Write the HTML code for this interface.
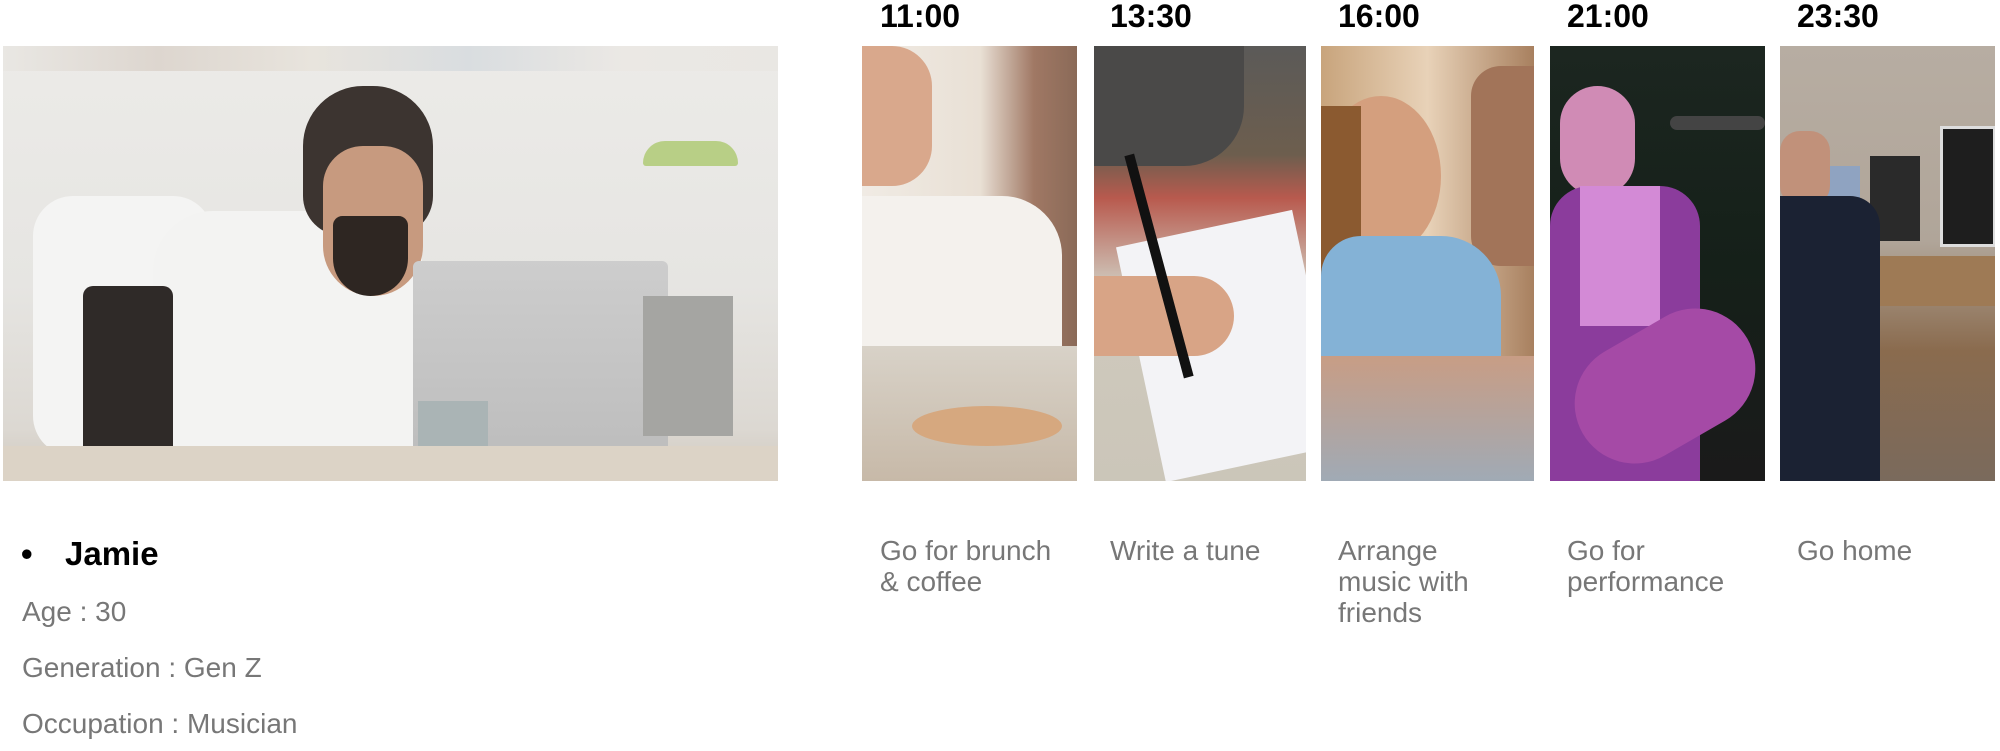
<!DOCTYPE html>
<html><head><meta charset="utf-8"><style>
body{margin:0;width:2000px;height:751px;background:#fff;position:relative;overflow:hidden;font-family:"Liberation Sans",sans-serif}
.p{position:absolute;top:46px;height:435px;overflow:hidden}
.t{position:absolute;top:-1px;font-weight:bold;font-size:32px;color:#000;line-height:34px}
.l{position:absolute;top:535px;font-size:28px;line-height:31px;color:#777;font-weight:300}
.i{position:absolute;left:22px;font-size:28px;color:#777;line-height:32px}
.s{position:absolute}
</style></head><body>

<div class="p" style="left:3px;width:775px;background:linear-gradient(180deg,#ecebe8 0%,#e6e5e2 55%,#dcd8d2 88%,#cfc8bd 100%)">
  <div class="s" style="left:0;top:0;width:775px;height:25px;background:linear-gradient(90deg,#e9e7e3,#ddd6cf 20%,#e8e4dd 40%,#d9dde0 60%,#ebe8e4 80%,#e9e7e3)"></div>
  <div class="s" style="left:30px;top:150px;width:180px;height:260px;background:#f4f4f3;border-radius:40px"></div>
  <div class="s" style="left:150px;top:165px;width:270px;height:260px;background:#f3f3f2;border-radius:60px 60px 10px 10px"></div>
  <div class="s" style="left:300px;top:40px;width:130px;height:150px;background:#3c3430;border-radius:60px 60px 40px 40px"></div>
  <div class="s" style="left:320px;top:100px;width:100px;height:150px;background:#c79a7f;border-radius:40px 40px 50px 50px"></div>
  <div class="s" style="left:330px;top:170px;width:75px;height:80px;background:#2e2622;border-radius:10px 10px 40px 40px"></div>
  <div class="s" style="left:80px;top:240px;width:90px;height:170px;background:#2f2a28;border-radius:10px"></div>
  <div class="s" style="left:410px;top:215px;width:255px;height:195px;background:linear-gradient(#cdcdcd,#bdbdbd);border-radius:6px"></div>
  <div class="s" style="left:640px;top:250px;width:90px;height:140px;background:#a5a5a2"></div>
  <div class="s" style="left:640px;top:95px;width:95px;height:25px;background:#b8cf86;border-radius:30px 30px 4px 4px"></div>
  <div class="s" style="left:415px;top:355px;width:70px;height:80px;background:#aab4b5"></div>
  <div class="s" style="left:0;top:400px;width:775px;height:35px;background:#dcd3c6"></div>
</div>

<div class="p" style="left:862px;width:215px;background:linear-gradient(90deg,#f0ebe4 0%,#e9e0d5 55%,#a07864 80%,#8a6a58 100%)">
  <div class="s" style="left:0;top:0;width:70px;height:140px;background:#d9a88c;border-radius:0 40px 40px 0"></div>
  <div class="s" style="left:0;top:150px;width:200px;height:160px;background:#f4f1ed;border-radius:0 60px 0 0"></div>
  <div class="s" style="left:0;top:300px;width:215px;height:135px;background:linear-gradient(#d8d2c8,#c7b9a8)"></div>
  <div class="s" style="left:50px;top:360px;width:150px;height:40px;background:#d6a87f;border-radius:50%"></div>
</div>

<div class="p" style="left:1094px;width:212px;background:linear-gradient(180deg,#5b5a58 0%,#6d5e4e 25%,#b85a4e 35%,#cfc9bd 55%,#cbc6b9 100%)">
  <div class="s" style="left:0;top:0;width:150px;height:120px;background:#4a4948;border-radius:0 0 60px 0"></div>
  <div class="s" style="left:45px;top:180px;width:180px;height:240px;background:#f3f3f6;transform:rotate(-12deg)"></div>
  <div class="s" style="left:0;top:230px;width:140px;height:80px;background:#d8a486;border-radius:0 40px 40px 0"></div>
  <div class="s" style="left:60px;top:105px;width:10px;height:230px;background:#111;transform:rotate(-15deg)"></div>
</div>

<div class="p" style="left:1321px;width:213px;background:linear-gradient(90deg,#c8a47c,#e8d2b8 50%,#a8805f)">
  <div class="s" style="left:0;top:50px;width:120px;height:160px;background:#d49f7e;border-radius:50%"></div>
  <div class="s" style="left:0;top:60px;width:40px;height:200px;background:#8b5a30"></div>
  <div class="s" style="left:150px;top:20px;width:70px;height:200px;background:#a27459;border-radius:30px 0 0 30px"></div>
  <div class="s" style="left:0;top:190px;width:180px;height:160px;background:#84b2d6;border-radius:40px 60px 0 0"></div>
  <div class="s" style="left:0;top:310px;width:213px;height:125px;background:linear-gradient(#c89d85,#a0aab5)"></div>
</div>

<div class="p" style="left:1550px;width:215px;background:linear-gradient(180deg,#1c2620 0%,#152019 50%,#1a1a1a 100%)">
  <div class="s" style="left:10px;top:40px;width:75px;height:110px;background:#d08bb5;border-radius:40px"></div>
  <div class="s" style="left:0;top:140px;width:150px;height:295px;background:#8b3c9c;border-radius:40px 40px 0 0"></div>
  <div class="s" style="left:30px;top:140px;width:80px;height:140px;background:#d38ad6"></div>
  <div class="s" style="left:20px;top:280px;width:190px;height:120px;background:#a54aa6;border-radius:60px;transform:rotate(-30deg)"></div>
  <div class="s" style="left:120px;top:70px;width:95px;height:14px;background:#444;border-radius:7px"></div>
</div>

<div class="p" style="left:1780px;width:215px;background:linear-gradient(180deg,#b7ada2 0%,#b0a599 45%,#8a6b4e 70%,#7a6a5c 100%)">
  <div class="s" style="left:160px;top:80px;width:50px;height:115px;background:#1e1e1e;border:3px solid #ddd"></div>
  <div class="s" style="left:90px;top:110px;width:50px;height:85px;background:#2a2a2a"></div>
  <div class="s" style="left:30px;top:120px;width:50px;height:70px;background:#8fa3c1"></div>
  <div class="s" style="left:80px;top:210px;width:135px;height:50px;background:#9e7a55"></div>
  <div class="s" style="left:0;top:85px;width:50px;height:75px;background:#c1917a;border-radius:20px"></div>
  <div class="s" style="left:0;top:150px;width:100px;height:285px;background:#1b2233;border-radius:0 30px 0 0"></div>
</div>

<div class="t" style="left:880px">11:00</div>
<div class="t" style="left:1110px">13:30</div>
<div class="t" style="left:1338px">16:00</div>
<div class="t" style="left:1567px">21:00</div>
<div class="t" style="left:1797px">23:30</div>

<div class="l" style="left:880px">Go for brunch<br>&amp; coffee</div>
<div class="l" style="left:1110px">Write a tune</div>
<div class="l" style="left:1338px">Arrange<br>music with<br>friends</div>
<div class="l" style="left:1567px">Go for<br>performance</div>
<div class="l" style="left:1797px">Go home</div>

<div style="position:absolute;left:21px;top:535px;font-size:33px;font-weight:bold;color:#000;line-height:38px">•</div>
<div style="position:absolute;left:65px;top:535px;font-size:33px;font-weight:bold;color:#000;line-height:38px">Jamie</div>
<div class="i" style="top:596px">Age : 30</div>
<div class="i" style="top:652px">Generation : Gen Z</div>
<div class="i" style="top:708px">Occupation : Musician</div>
</body></html>
